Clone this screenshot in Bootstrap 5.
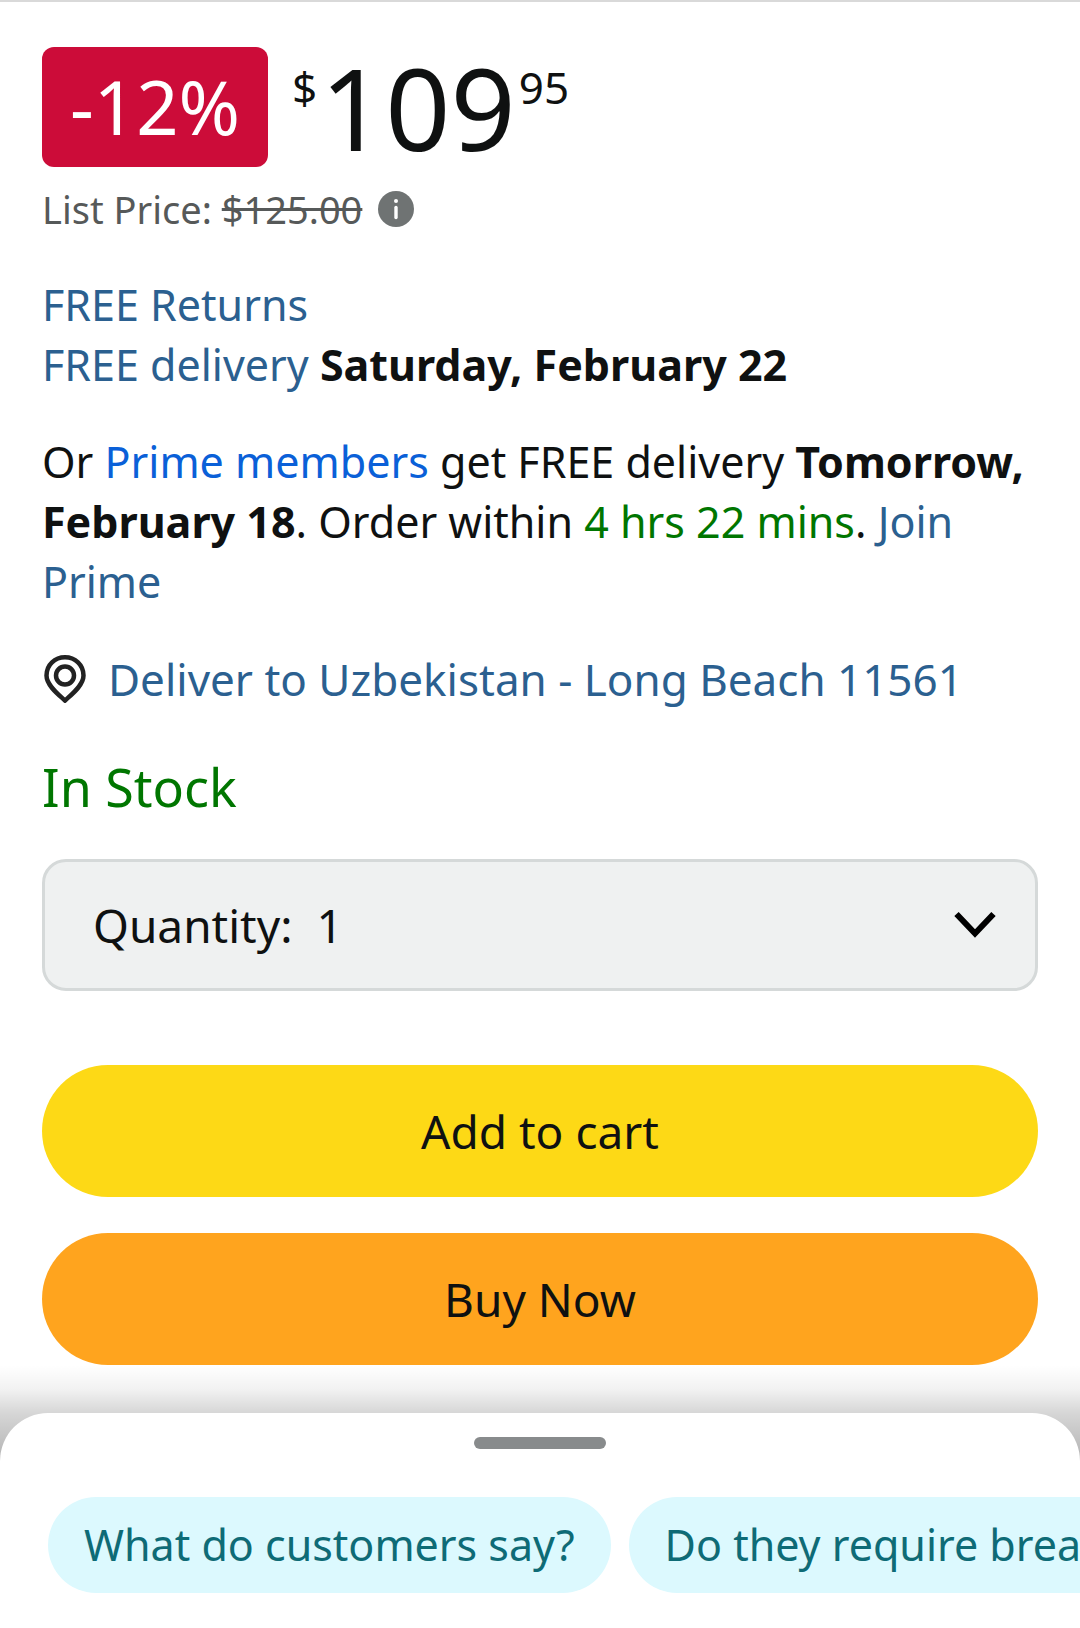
<!DOCTYPE html>
<html lang="en">
<head>
<meta charset="utf-8">
<meta name="viewport" content="width=device-width, initial-scale=1">
<title>Product offer</title>
<link href="https://cdn.jsdelivr.net/npm/bootstrap@5.3.0/dist/css/bootstrap.min.css" rel="stylesheet">
<script src="https://cdn.jsdelivr.net/npm/bootstrap@5.3.0/dist/js/bootstrap.bundle.min.js" defer></script>
<style>
body { font-family: "Noto Sans", "Open Sans", sans-serif; font-size: 43px; line-height: 60px; color: #0f1111; background: #fff; overflow-x: hidden; }
a { color: #2b6090; text-decoration: none; }
.offer { border-top: 2px solid #d9d9d9; padding: 45px 42px 48px; }
.deal { background: #cc0c39; color: #fff; font-size: 74px; line-height: 120px; border-radius: 12px; padding: 0 28px; }
.price { gap: 3px; }
.price-whole { font-size: 114px; line-height: 120px; }
.price-part { font-size: 44px; padding-top: 10px; }
.list-price { font-size: 38px; line-height: 52px; color: #565959; margin: 16px 0 40px; gap: 16px; }
.info-btn { line-height: 0; }
.info-btn svg { width: 36px; height: 36px; }
.prime-link { color: #0a60d8; }
.green { color: #007600; }
.para { margin-bottom: 37px; }
.deliver { font-size: 44px; gap: 22px; padding-left: 2px; margin-bottom: 42px; }
.deliver svg { width: 42px; height: 48px; }
.stock { font-size: 52px; line-height: 72px; margin-bottom: 36px; }
.qty-box { margin-bottom: 74px; }
.qty { height: 132px; border: 3px solid #d5d9d9; border-radius: 24px; background: #eff1f1; padding: 0 48px; font-size: 46px; line-height: 60px; color: #0f1111; }
.qty-chevron { right: 42px; width: 42px; height: 28px; pointer-events: none; }
.cta { height: 132px; border: 0; font-size: 46px; line-height: 60px; color: #0f1111; margin-bottom: 36px; }
.cta:last-child { margin-bottom: 0; }
.cta-cart { background: #fdd916; }
.cta-buy { background: #ffa41e; }
/* shade that rises from behind the bottom sheet */
.sheet-wrap::before { content: ""; position: absolute; left: 0; right: 0; top: -48px; height: 96px; background: linear-gradient(rgba(0, 0, 0, 0), rgba(0, 0, 0, .05) 25%, rgba(0, 0, 0, .16) 50%, rgba(0, 0, 0, .3)); pointer-events: none; }
.sheet { background: #fff; border-radius: 48px 48px 0 0; padding: 24px 0 35px; }
.handle { width: 132px; height: 12px; background: #888b8c; margin-bottom: 48px; }
.chips { gap: 18px; padding-left: 48px; }
.chip { height: 96px; background: #dcf9fe; color: #0e6b76; font-size: 43px; line-height: 60px; border: 0; padding: 0 36px; }
</style>
</head>
<body>
<main class="offer">
  <div class="d-flex align-items-start">
    <span class="deal flex-shrink-0">-12%</span>
    <div class="price d-flex align-items-start ms-4">
      <span class="price-part">$</span>
      <span class="price-whole">109</span>
      <span class="price-part">95</span>
    </div>
  </div>
  <div class="list-price d-flex align-items-center">
    <span>List Price: <s>$125.00</s></span>
    <button class="info-btn btn p-0 border-0" type="button" aria-label="About the list price">
      <svg viewBox="0 0 36 36" aria-hidden="true"><circle cx="18" cy="18" r="18" fill="#6f7373"/><circle cx="18" cy="10" r="2" fill="#fff"/><path d="M18 16.500v10" stroke="#fff" stroke-width="3.400" stroke-linecap="round"/></svg>
    </button>
  </div>
  <p class="para"><a href="#">FREE Returns</a><br><a href="#">FREE delivery</a> <b>Saturday, February 22</b></p>
  <p class="para">Or <a class="prime-link" href="#">Prime members</a> get FREE delivery <b>Tomorrow, February 18</b>. Order within <span class="green">4 hrs 22 mins</span>. <a href="#">Join Prime</a></p>
  <a class="deliver d-flex align-items-center" href="#">
    <svg class="flex-shrink-0" viewBox="0 0 42 48" fill="none" stroke="#222" stroke-width="4.500" aria-hidden="true"><path d="M21 45.500C15 40 2.500 30.500 2.500 20.500C2.500 9.500 11 2.300 21 2.300S39.500 9.500 39.500 20.500C39.500 30.500 27 40 21 45.500Z"/><circle cx="21" cy="20.500" r="9"/></svg>
    <span>Deliver to Uzbekistan - Long Beach 11561</span>
  </a>
  <p class="stock green">In Stock</p>
  <div class="qty-box position-relative">
    <select class="qty form-select" aria-label="Quantity">
      <option>Quantity:&nbsp; 1</option>
      <option>Quantity:&nbsp; 2</option>
      <option>Quantity:&nbsp; 3</option>
    </select>
    <svg class="qty-chevron position-absolute top-50 translate-middle-y" viewBox="0 0 42 28" fill="none" stroke="#000" stroke-width="6" aria-hidden="true"><path d="M2.500 3L21 22.500L39.500 3"/></svg>
  </div>
  <button class="cta cta-cart btn rounded-pill w-100 d-block" type="button">Add to cart</button>
  <button class="cta cta-buy btn rounded-pill w-100 d-block" type="button">Buy Now</button>
</main>
<div class="sheet-wrap position-relative">
  <section class="sheet position-relative">
    <div class="handle rounded-pill mx-auto"></div>
    <div class="chips d-flex overflow-hidden">
      <button class="chip btn rounded-pill flex-shrink-0 text-nowrap" type="button">What do customers say?</button>
      <button class="chip btn rounded-pill flex-shrink-0 text-nowrap" type="button">Do they require breaking in?</button>
    </div>
  </section>
</div>
</body>
</html>
